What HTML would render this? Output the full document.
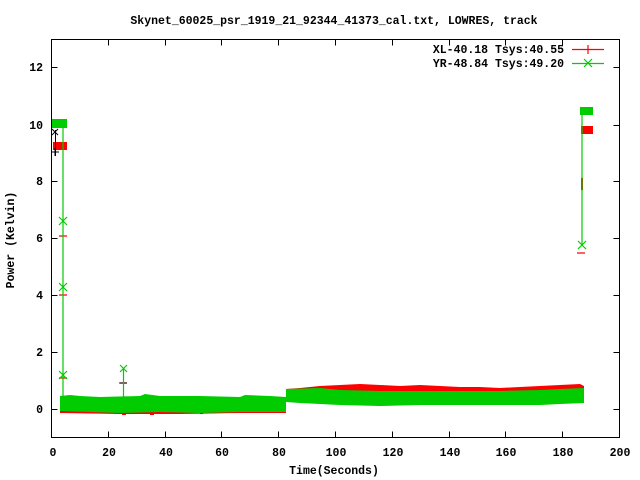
<!DOCTYPE html>
<html><head><meta charset="utf-8"><style>
html,body{margin:0;padding:0;background:#fff;width:640px;height:480px;overflow:hidden}
svg text{font-family:"Liberation Mono","DejaVu Sans Mono",monospace;font-weight:bold;font-size:11.5px;fill:#000}
</style></head><body>
<svg width="640" height="480" viewBox="0 0 640 480" xmlns="http://www.w3.org/2000/svg">
<text x="334" y="24" text-anchor="middle">Skynet_60025_psr_1919_21_92344_41373_cal.txt, LOWRES, track</text>
<g stroke="#000" stroke-width="1" fill="none">
<rect x="51.5" y="39.5" width="568" height="398"/>
<path d="M51.5 409.5h6M619.5 409.5h-6M51.5 352.5h6M619.5 352.5h-6M51.5 295.5h6M619.5 295.5h-6M51.5 238.5h6M619.5 238.5h-6M51.5 181.5h6M619.5 181.5h-6M51.5 125.5h6M619.5 125.5h-6M51.5 67.5h6M619.5 67.5h-6"/>
<path d="M108.5 437.5v-6M108.5 39.5v6M165.5 437.5v-6M165.5 39.5v6M221.5 437.5v-6M221.5 39.5v6M278.5 437.5v-6M278.5 39.5v6M335.5 437.5v-6M335.5 39.5v6M392.5 437.5v-6M392.5 39.5v6M449.5 437.5v-6M449.5 39.5v6M505.5 437.5v-6M505.5 39.5v6M562.5 437.5v-6M562.5 39.5v6"/>
</g>
<g text-anchor="end">
<text x="43" y="413">0</text><text x="43" y="356">2</text><text x="43" y="299">4</text><text x="43" y="242">6</text><text x="43" y="185">8</text><text x="43" y="129">10</text><text x="43" y="71">12</text>
</g>
<g text-anchor="middle">
<text x="53" y="456">0</text><text x="109" y="456">20</text><text x="166" y="456">40</text><text x="222" y="456">60</text><text x="279" y="456">80</text><text x="336" y="456">100</text><text x="393" y="456">120</text><text x="450" y="456">140</text><text x="506" y="456">160</text><text x="563" y="456">180</text><text x="620" y="456">200</text>
<text x="334" y="474">Time(Seconds)</text>
<text x="0" y="0" transform="translate(14 240) rotate(-90)">Power (Kelvin)</text>
</g>
<g text-anchor="end">
<text x="564" y="53">XL-40.18 Tsys:40.55</text>
<text x="564" y="67">YR-48.84 Tsys:49.20</text>
</g>
<path d="M572 49.5h32M588 45v9" stroke="#f00" stroke-width="1.2"/>
<path d="M572 63.5h32M584 59l8 8M592 59l-8 8" stroke="#0c0" stroke-width="1.2"/>
<g fill="#f00" stroke="none">
<rect x="53" y="142" width="14" height="8"/>
<polygon points="60,399 120,400 180,400 240,400 286,400 286,413 240,413 180,414 120,414 60,413"/>
<polygon points="286,389 300,388 320,386 340,385 360,384 380,385 400,386 420,385 440,386 460,387 480,387 500,388 520,387 540,386 560,385 580,384 584,386 584,396 286,396"/>
<rect x="581" y="126" width="12" height="8"/>
<rect x="581" y="178" width="2" height="12"/>
<rect x="150" y="411" width="4" height="4"/><rect x="200" y="411" width="3" height="3"/><rect x="122" y="411" width="4" height="4"/>
</g>
<g stroke="#f00" stroke-width="1.2" fill="none">
<path d="M59 236h8M59 295h8M59 378h8M119 383h8M577 253h8"/>
</g>
<g stroke="#000" stroke-width="1" fill="none">
<path d="M55.5 130v26M51 152h8M55 148v8M52 129l6 6M58 129l-6 6M123.5 370v14M120 383h7"/>
</g>
<g fill="#0c0" stroke="none">
<rect x="52" y="119" width="15" height="9"/>
<polygon points="60,396 70,395 80,396 100,397 140,396 145,394 160,396 200,396 240,397 245,395 270,396 286,397 286,412 270,412 240,412 200,413 160,412 120,413 90,412 60,411"/>
<polygon points="286,389 320,388 340,390 380,391 420,391 460,391 500,391 540,390 560,389 584,388 584,403 560,404 540,405 500,405 460,405 420,405 380,406 340,405 300,403 286,402"/>
<rect x="580" y="107" width="13" height="8"/>
</g>
<g stroke="#0c0" stroke-width="1.2" fill="none">
<path d="M63 125v275M123.5 369v30M582 111v135"/>
<path d="M59 217l8 8M67 217l-8 8M59 283l8 8M67 283l-8 8M59 371l8 8M67 371l-8 8M120 365l7 7M127 365l-7 7M578 241l8 8M586 241l-8 8"/>
</g>
</svg>
</body></html>
